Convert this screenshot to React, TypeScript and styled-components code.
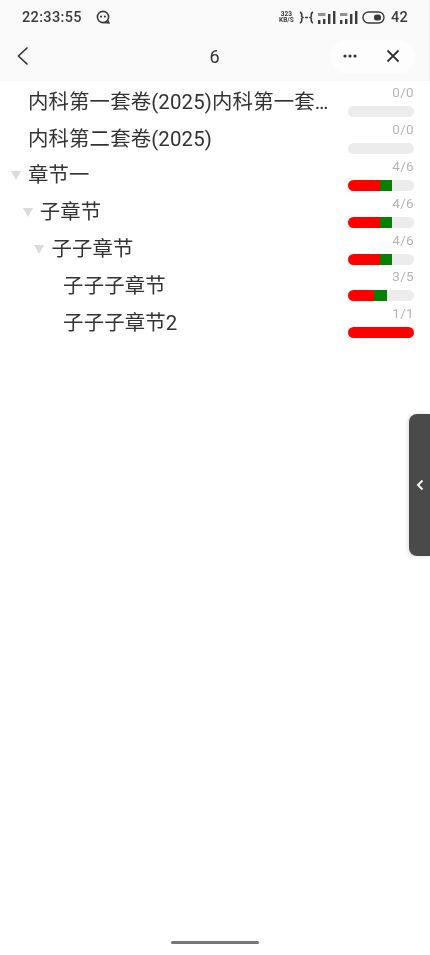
import React from "react";
import styled, { createGlobalStyle } from "styled-components";

const Global = createGlobalStyle`
  html, body { margin: 0; padding: 0; background: #fff; }
  * { box-sizing: border-box; }
`;

const Page = styled.div`
  position: relative;
  width: 430px;
  height: 955px;
  overflow: hidden;
  display: flex;
  flex-direction: column;
  background: #fff;
  font-family: "Roboto", "Noto Sans CJK SC", sans-serif;
  color: #3a3a3a;
  filter: blur(0.5px);
`;

const Top = styled.header`
  background: #f9f9f9;
  height: 81px;
  flex: none;
`;

const StatusBar = styled.div`
  height: 35px;
  padding: 0 22px 1px 22px;
  display: flex;
  align-items: center;
  justify-content: space-between;
`;

const StatusLeft = styled.div`
  display: flex;
  align-items: center;
  gap: 14px;
  font-size: 14.5px;
  font-weight: 500;
  letter-spacing: 0.35px;
  color: #3c3c3c;
`;

const StatusRight = styled.div`
  display: flex;
  align-items: center;
  gap: 4px;
  color: #3c3c3c;
`;

const Speed = styled.span`
  font-size: 6.5px;
  line-height: 6.5px;
  font-weight: 700;
  text-align: center;
  width: 17px;
  display: block;
`;

const Battery = styled.span`
  font-size: 14.5px;
  font-weight: 500;
  margin-left: 1px;
  letter-spacing: 0.3px;
`;

const NavBar = styled.div`
  height: 46px;
  padding: 0 15px 4px 16px;
  display: grid;
  grid-template-columns: 1fr auto 1fr;
  align-items: center;
`;

const BackButton = styled.button`
  border: 0;
  padding: 0;
  background: none;
  width: 14px;
  height: 20px;
  color: #333;
  display: block;
`;

const Title = styled.div`
  font-size: 18px;
  color: #333;
  transform: translateX(-1px);
`;

const Capsule = styled.div`
  justify-self: end;
  width: 85px;
  height: 33px;
  border-radius: 17px;
  background: #fdfdfd;
  box-shadow: 0 0 3px #fdfdfd;
  display: flex;
  align-items: center;
  justify-content: space-between;
  padding: 0 15px 0 13px;
  color: #333;
`;

const List = styled.main`
  flex: 1;
  display: flex;
  flex-direction: column;
  padding: 2px 16px 0 0;
`;

const Row = styled.div`
  height: 36.8px;
  display: flex;
  align-items: center;
  justify-content: space-between;
`;

const Label = styled.div<{ $level: number }>`
  flex: 1;
  min-width: 0;
  display: flex;
  align-items: center;
  padding-left: ${(p) => 11 + p.$level * 11.7}px;
  margin-top: 1px;
`;

const Arrow = styled.span<{ $hidden: boolean }>`
  flex: none;
  width: 0;
  height: 0;
  margin-right: 7px;
  border-left: 5px solid transparent;
  border-right: 5px solid transparent;
  border-top: 9px solid ${(p) => (p.$hidden ? "transparent" : "#dcdcdc")};
`;

const Name = styled.span`
  font-size: 20.4px;
  line-height: 28px;
  letter-spacing: 0.15px;
  color: #333;
  white-space: nowrap;
  overflow: hidden;
  text-overflow: ellipsis;
`;

const Progress = styled.div`
  flex: none;
  width: 66px;
  margin-left: 13px;
  display: flex;
  flex-direction: column;
  align-items: flex-end;
  gap: 7px;
`;

const Count = styled.span`
  font-size: 13.5px;
  line-height: 14px;
  color: #b4b4b4;
  letter-spacing: 0.3px;
`;

const Track = styled.div`
  width: 100%;
  height: 11px;
  border-radius: 5.5px;
  background: #ececec;
  overflow: hidden;
  display: flex;
`;

const Done = styled.div`
  height: 100%;
  background: #ff0000;
`;

const Review = styled.div`
  height: 100%;
  background: #058005;
`;

const Drawer = styled.button`
  position: absolute;
  right: 0;
  top: 414px;
  width: 21px;
  height: 142px;
  border: 0;
  padding: 0;
  border-radius: 8px 0 0 8px;
  background: #4a4a4a;
  box-shadow: -1px 0 4px rgba(0, 0, 0, 0.15);
  display: flex;
  align-items: center;
  justify-content: center;
  color: #f4f4f4;
`;

const HomeBar = styled.div`
  position: absolute;
  left: 171px;
  bottom: 11px;
  width: 88px;
  height: 3px;
  border-radius: 2px;
  background: #777;
`;

const EdgeLine = styled.div`
  position: absolute;
  right: 0;
  top: 0;
  width: 1px;
  height: 81px;
  background: #eeeeee;
`;

type Item = { name: string; level: number; arrow: boolean; done: number; total: number; red: number; green: number };

const items: Item[] = [
  { name: "内科第一套卷(2025)内科第一套卷(2025)", level: 0, arrow: false, done: 0, total: 0, red: 0, green: 0 },
  { name: "内科第二套卷(2025)", level: 0, arrow: false, done: 0, total: 0, red: 0, green: 0 },
  { name: "章节一", level: 0, arrow: true, done: 4, total: 6, red: 49, green: 17 },
  { name: "子章节", level: 1, arrow: true, done: 4, total: 6, red: 49, green: 17 },
  { name: "子子章节", level: 2, arrow: true, done: 4, total: 6, red: 49, green: 17 },
  { name: "子子子章节", level: 3, arrow: false, done: 3, total: 5, red: 39, green: 20 },
  { name: "子子子章节2", level: 3, arrow: false, done: 1, total: 1, red: 100, green: 0 },
];

function Bars() {
  const bars = [
    [0, 4],
    [5, 5],
    [10, 10],
    [15, 13],
  ];
  return (
    <svg width="18" height="13" viewBox="0 0 18 13" fill="currentColor">
      {bars.map(([x, h]) => (
        <rect key={x} x={x} y={13 - h} width="2.4" height={h} />
      ))}
      <rect x="0" y="2" width="7.4" height="3" opacity="0.55" />
    </svg>
  );
}

export default function App() {
  return (
    <Page>
      <Global />
      <Top>
        <StatusBar>
          <StatusLeft>
            <span>22:33:55</span>
            <svg width="14" height="14" viewBox="0 0 14 14" fill="none" stroke="currentColor" strokeWidth="1.6">
              <circle cx="7" cy="7" r="5.6" />
              <path d="M8 12.5 12.8 12.8 11.6 10" />
              <circle cx="5" cy="6.6" r="1.1" fill="currentColor" stroke="none" />
              <circle cx="9" cy="6.6" r="1.1" fill="currentColor" stroke="none" />
            </svg>
          </StatusLeft>
          <StatusRight>
            <Speed>323 KB/S</Speed>
            <svg width="15" height="13" viewBox="0 0 15 13" fill="none" stroke="currentColor" strokeWidth="1.5">
              <path d="M1 1c2 1 2 3 1.6 4.5L4 6.5 2.6 7.5C3 9 3 11 1 12" />
              <path d="M14 1c-2 1-2 3-1.6 4.5L11 6.5l1.4 1C12 9 12 11 14 12" />
              <path d="M6 6.5h3" />
            </svg>
            <Bars />
            <Bars />
            <svg width="24" height="13" viewBox="0 0 24 13" fill="none" stroke="currentColor">
              <rect x="1" y="1" width="21" height="11" rx="5.5" strokeWidth="1.4" />
              <rect x="12" y="3.5" width="7" height="6" rx="2.5" fill="currentColor" stroke="none" />
            </svg>
            <Battery>42</Battery>
          </StatusRight>
        </StatusBar>
        <NavBar>
          <BackButton aria-label="back">
            <svg width="14" height="20" viewBox="0 0 14 20" fill="none" stroke="currentColor" strokeWidth="1.6">
              <path d="M11.5 1.5 2.5 10l9 8.5" />
            </svg>
          </BackButton>
          <Title>6</Title>
          <Capsule>
            <svg width="14" height="4" viewBox="0 0 14 4" fill="currentColor">
              <circle cx="2" cy="2" r="1.6" />
              <circle cx="7" cy="2" r="1.6" />
              <circle cx="12" cy="2" r="1.6" />
            </svg>
            <svg width="14" height="14" viewBox="0 0 14 14" fill="none" stroke="currentColor" strokeWidth="1.8">
              <path d="M1.5 1.5 12.5 12.5M12.5 1.5 1.5 12.5" />
            </svg>
          </Capsule>
        </NavBar>
      </Top>
      <List>
        {items.map((it) => (
          <Row key={it.name}>
            <Label $level={it.level}>
              <Arrow $hidden={!it.arrow} />
              <Name>{it.name}</Name>
            </Label>
            <Progress>
              <Count>
                {it.done}/{it.total}
              </Count>
              <Track>
                <Done style={{ width: `${it.red}%` }} />
                <Review style={{ width: `${it.green}%` }} />
              </Track>
            </Progress>
          </Row>
        ))}
      </List>
      <Drawer aria-label="open">
        <svg width="8" height="12" viewBox="0 0 8 12" fill="none" stroke="currentColor" strokeWidth="2">
          <path d="M6.5 1.5 2 6l4.5 4.5" />
        </svg>
      </Drawer>
      <EdgeLine />
      <HomeBar />
    </Page>
  );
}
